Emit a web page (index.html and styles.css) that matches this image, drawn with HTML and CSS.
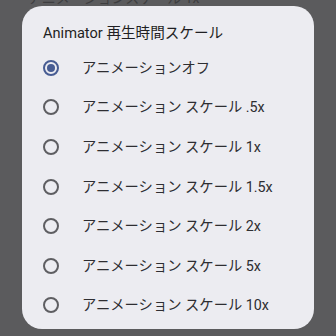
FILE: index.html
```html
<!DOCTYPE html>
<html lang="ja">
  <head>
    <meta charset="UTF-8" />
    <meta name="viewport" content="width=device-width, initial-scale=1.0" />
    <title>Animator 再生時間スケール</title>
    <link rel="stylesheet" href="styles.css">
  </head>
  <body>
    <div class="behind">
      <div class="behindText">アニメーションスケール 1x</div>
    </div>
    <div class="dialog">
      <div class="dialogTitle">Animator 再生時間スケール</div>
      <div class="optionList">
        <div class="option">
          <span class="radio checked"></span>
          <span class="optionLabel">アニメーションオフ</span>
        </div>
        <div class="option">
          <span class="radio"></span>
          <span class="optionLabel">アニメーション スケール .5x</span>
        </div>
        <div class="option">
          <span class="radio"></span>
          <span class="optionLabel">アニメーション スケール 1x</span>
        </div>
        <div class="option">
          <span class="radio"></span>
          <span class="optionLabel">アニメーション スケール 1.5x</span>
        </div>
        <div class="option">
          <span class="radio"></span>
          <span class="optionLabel">アニメーション スケール 2x</span>
        </div>
        <div class="option">
          <span class="radio"></span>
          <span class="optionLabel">アニメーション スケール 5x</span>
        </div>
        <div class="option">
          <span class="radio"></span>
          <span class="optionLabel">アニメーション スケール 10x</span>
        </div>
      </div>
    </div>
  </body>
</html>
```

FILE: styles.css
```css
html {
  box-sizing: border-box;
  font-family: Roboto, "Noto Sans CJK JP", sans-serif;
}

*,
*:before,
*:after {
  box-sizing: inherit;
}

body {
  margin: 0;
  padding: 0;
  width: 336px;
  height: 336px;
  overflow: hidden;
  background-color: #5b5b5d;
}

.behind {
  height: 6px;
  overflow: hidden;
  padding-left: 28px;
}

.behindText {
  margin-top: -9px;
  font-size: 14px;
  line-height: 14px;
  color: #3e3e40;
}

.dialog {
  width: 292px;
  height: 323px;
  margin-left: 22px;
  border-radius: 20px;
  background-color: #ececf1;
  padding: 17px 0 0 21px;
}

.dialogTitle {
  font-size: 14.6px;
  line-height: 20px;
  color: #1f1f23;
  margin-bottom: 5px;
}

.optionList {
  display: flex;
  flex-direction: column;
}

.option {
  display: flex;
  flex-direction: row;
  align-items: center;
  height: 39.6px;
  gap: 23px;
}

.radio {
  flex: none;
  width: 16px;
  height: 16px;
  border: 2px solid #5e5e62;
  border-radius: 50%;
  display: flex;
  align-items: center;
  justify-content: center;
}

.radio.checked {
  border-color: #475c93;
}

.radio.checked:after {
  content: "";
  width: 8px;
  height: 8px;
  border-radius: 50%;
  background-color: #475c93;
}

.optionLabel {
  font-size: 14.3px;
  line-height: 20px;
  color: #2e2e32;
}
```
